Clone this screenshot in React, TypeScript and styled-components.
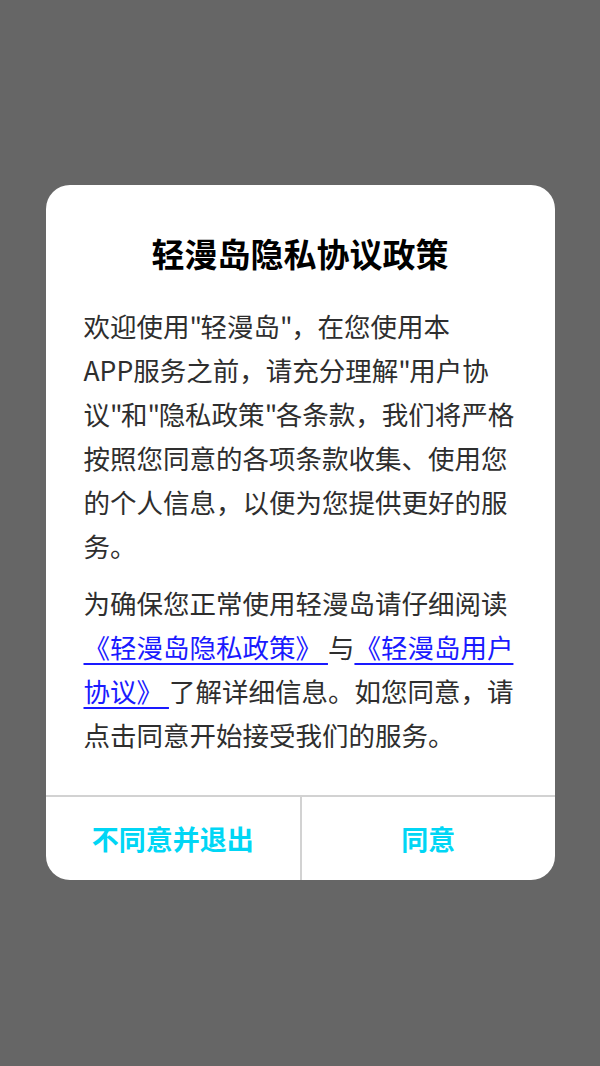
import React from 'react';
import styled, { createGlobalStyle } from 'styled-components';

const GlobalStyle = createGlobalStyle`
  html, body {
    margin: 0;
    padding: 0;
    background: #666666;
  }
  body {
    font-family: "Noto Sans CJK SC", "Noto Sans", sans-serif;
  }
`;

const Screen = styled.div`
  width: 600px;
  height: 1066px;
  background: #666666;
  display: flex;
  justify-content: center;
  padding-top: 185px;
  box-sizing: border-box;
`;

const Dialog = styled.div`
  width: 509px;
  height: 695px;
  background: #fff;
  border-radius: 24px;
  overflow: hidden;
  display: flex;
  flex-direction: column;
`;

const Body = styled.div`
  flex: 1;
  padding: 46px 38px 0 38px;
`;

const Title = styled.h1`
  margin: 0 0 29px;
  text-align: center;
  font-size: 33px;
  line-height: 44px;
  font-weight: 700;
  color: #000;
`;

const Paragraph = styled.p`
  margin: 0 0 13px;
  font-size: 26.5px;
  line-height: 44px;
  color: #2e2e2e;
  white-space: nowrap;
`;

const Quote = styled.span`
  letter-spacing: -1.5px;
`;

const DocLink = styled.a`
  color: #1a1aff;
  text-decoration: underline;
  text-underline-offset: 5px;
  cursor: pointer;
`;

const Footer = styled.div`
  height: 83px;
  border-top: 2px solid #d2d2d2;
  display: grid;
  grid-template-columns: 1fr 1fr;
`;

const ActionButton = styled.button<{ $divider?: boolean }>`
  border: none;
  background: transparent;
  border-left: ${(p) => (p.$divider ? '2px solid #d2d2d2' : 'none')};
  font-family: inherit;
  font-size: 27px;
  font-weight: 700;
  color: #00d6f5;
  padding: 0;
  cursor: pointer;
`;

export default function App() {
  return (
    <>
      <GlobalStyle />
      <Screen>
        <Dialog>
          <Body>
            <Title>轻漫岛隐私协议政策</Title>
            <Paragraph>
              欢迎使用<Quote>"</Quote>轻漫岛<Quote>"</Quote>，在您使用本
              <br />
              APP服务之前，请充分理解<Quote>"</Quote>用户协
              <br />
              议<Quote>"</Quote>和<Quote>"</Quote>隐私政策<Quote>"</Quote>各条款，我们将严格
              <br />
              按照您同意的各项条款收集、使用您
              <br />
              的个人信息，以便为您提供更好的服
              <br />
              务。
            </Paragraph>
            <Paragraph>
              为确保您正常使用轻漫岛请仔细阅读
              <br />
              <DocLink>《轻漫岛隐私政策》 </DocLink>与<DocLink>《轻漫岛用户</DocLink>
              <br />
              <DocLink>协议》 </DocLink>了解详细信息。如您同意，请
              <br />
              点击同意开始接受我们的服务。
            </Paragraph>
          </Body>
          <Footer>
            <ActionButton>不同意并退出</ActionButton>
            <ActionButton $divider>同意</ActionButton>
          </Footer>
        </Dialog>
      </Screen>
    </>
  );
}
